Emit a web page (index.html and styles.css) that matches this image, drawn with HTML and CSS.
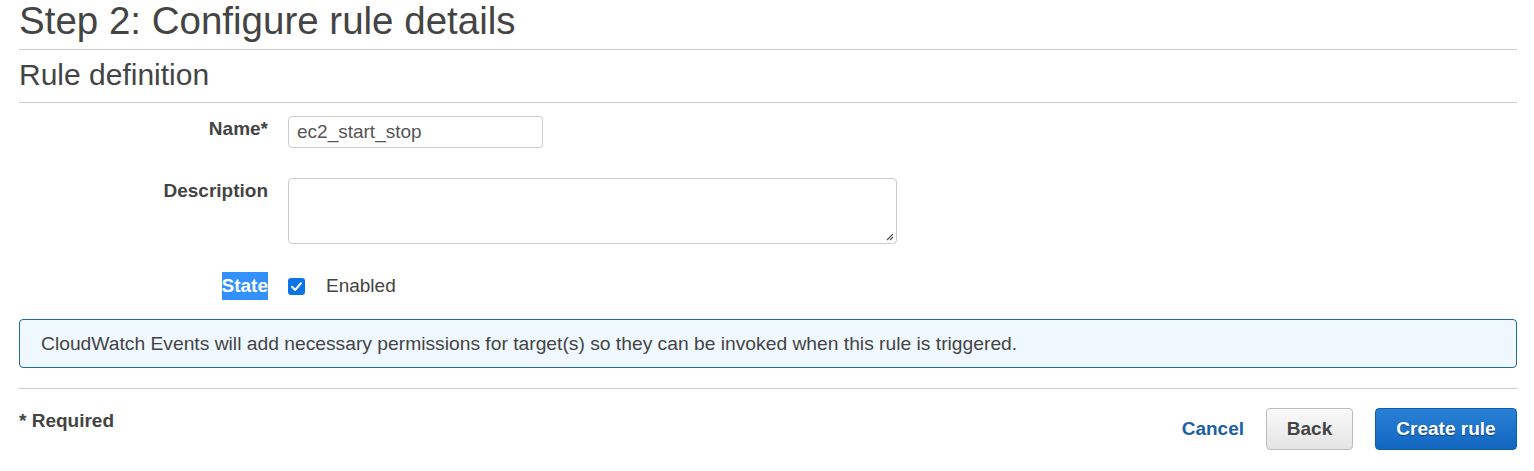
FILE: index.html
```html
<!DOCTYPE html>
<html>
<head>
<meta charset="utf-8">
<link rel="stylesheet" href="styles.css">
</head>
<body>
<div class="page">
  <h1 class="title">Step 2: Configure rule details</h1>
  <h2 class="subtitle">Rule definition</h2>
  <div class="form">
    <div class="row row-name">
      <label class="label">Name*</label>
      <div class="input">ec2_start_stop</div>
    </div>
    <div class="row row-desc">
      <label class="label">Description</label>
      <div class="textarea">
        <svg class="grip" width="8" height="8" viewBox="0 0 8 8"><path d="M7 1 L1 7 M7 4 L4 7" stroke="#555" stroke-width="1.1" fill="none"/></svg>
      </div>
    </div>
    <div class="row row-state">
      <label class="label"><span class="sel">State</span></label>
      <div class="check">
        <span class="box"><svg width="17" height="17" viewBox="0 0 17 17"><rect x="0" y="0" width="17" height="17" rx="3" fill="#0b75e6"/><path d="M4 8.8 L7.2 12 L13 5.2" stroke="#fff" stroke-width="2" fill="none" stroke-linecap="round" stroke-linejoin="round"/></svg></span>
        <span class="check-text">Enabled</span>
      </div>
    </div>
  </div>
  <div class="info">CloudWatch Events will add necessary permissions for target(s) so they can be invoked when this rule is triggered.</div>
  <div class="footer">
    <div class="required">* Required</div>
    <div class="actions">
      <a class="cancel">Cancel</a>
      <button class="btn btn-back">Back</button>
      <button class="btn btn-primary">Create rule</button>
    </div>
  </div>
</div>
</body>
</html>
```
FILE: styles.css
```css
html, body {
  margin: 0;
  padding: 0;
  background: #fff;
}
body {
  font-family: "Liberation Sans", Arial, sans-serif;
  color: #444;
}
.page {
  width: 1498px;
  margin-left: 19px;
}
.title {
  margin: 0;
  font-weight: normal;
  font-size: 38.5px;
  line-height: 42px;
  height: 49px;
  border-bottom: 1px solid #ccc;
  color: #444;
}
.subtitle {
  margin: 0;
  font-weight: normal;
  font-size: 30px;
  line-height: 50px;
  height: 52px;
  border-bottom: 1px solid #ccc;
  color: #444;
}
.form {
  padding-top: 13px;
}
.row {
  display: flex;
  gap: 20px;
}
.label {
  width: 249px;
  text-align: right;
  font-weight: bold;
  font-size: 19px;
  color: #444;
}
.row-name {
  height: 62px;
}
.row-name .label {
  padding-top: 2px;
}
.input {
  box-sizing: border-box;
  width: 255px;
  height: 32px;
  border: 1px solid #ccc;
  border-radius: 4px;
  padding: 0 8px;
  font-size: 19px;
  line-height: 30px;
  color: #555;
}
.row-desc {
  height: 94px;
}
.row-desc .label {
  padding-top: 2px;
}
.textarea {
  box-sizing: border-box;
  width: 609px;
  height: 66px;
  border: 1px solid #ccc;
  border-radius: 4px;
  position: relative;
}
.grip {
  position: absolute;
  right: 2px;
  bottom: 2px;
}
.row-state {
  height: 47px;
  align-items: flex-start;
}
.sel {
  display: inline-block;
  background: #3390ff;
  color: #fff;
  line-height: 28px;
  padding: 0;
}
.check {
  display: flex;
  align-items: center;
  height: 28px;
  gap: 21px;
}
.box {
  display: flex;
}
.check-text {
  font-size: 19px;
  color: #444;
}
.info {
  box-sizing: border-box;
  height: 49px;
  border: 1px solid #1f6a98;
  border-radius: 4px;
  background: #f0f8ff;
  padding: 0 21px;
  font-size: 19.25px;
  line-height: 47px;
  color: #444;
}
.footer {
  margin-top: 20px;
  border-top: 1px solid #ccc;
  display: flex;
  justify-content: space-between;
  align-items: flex-start;
  padding-top: 19px;
}
.required {
  font-weight: bold;
  font-size: 19px;
  padding-top: 2px;
  color: #444;
}
.actions {
  display: flex;
  align-items: center;
  gap: 22px;
}
.cancel {
  color: #1a5fa8;
  font-weight: bold;
  font-size: 19px;
}
.btn {
  box-sizing: border-box;
  height: 42px;
  border-radius: 4px;
  font-family: "Liberation Sans", Arial, sans-serif;
  font-weight: bold;
  font-size: 19px;
  cursor: pointer;
}
.btn-back {
  width: 87px;
  border: 1px solid #bbb;
  background: linear-gradient(#fafafa, #e4e4e4);
  color: #444;
}
.btn-primary {
  width: 142px;
  border: 1px solid #0f5ea8;
  background: linear-gradient(#2a80d6, #1266c0);
  color: #fff;
  text-shadow: 0 1px 1px rgba(0,0,0,0.4);
}
```
